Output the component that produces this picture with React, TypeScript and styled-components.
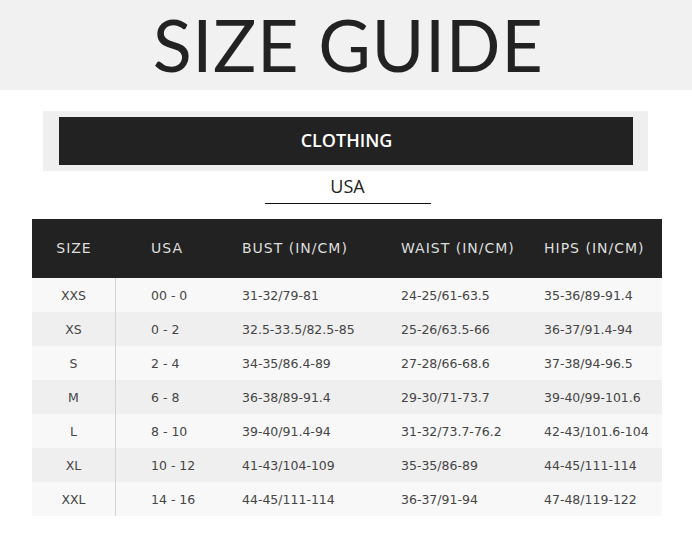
import styled, { createGlobalStyle } from 'styled-components';

const GlobalStyle = createGlobalStyle`
	html, body {
		margin: 0;
		padding: 0;
		background: #ffffff;
	}
	* {
		box-sizing: border-box;
	}
`;

const Page = styled.div`
	width: 692px;
	height: 543px;
	overflow: hidden;
	background: #fff;
`;

const Banner = styled.header`
	height: 90px;
	background: #f1f1f1;
	display: flex;
	justify-content: center;
	align-items: center;
`;

const Title = styled.h1`
	margin: 0;
	font-family: 'Lato', sans-serif;
	font-weight: 400;
	font-size: 72px;
	line-height: 1;
	letter-spacing: 0.6px;
	color: #222;
	padding-bottom: 3px;
	padding-left: 4px;
`;

const TabBox = styled.div`
	margin: 21px 44px 0 43px;
	height: 60px;
	padding: 6px 15px 6px 16px;
	background: #efefef;
`;

const Tab = styled.div`
	height: 48px;
	background: #222;
	color: #fff;
	display: flex;
	align-items: center;
	justify-content: center;
	font-family: 'Open Sans', sans-serif;
	font-weight: 600;
	font-size: 18px;
	padding-left: 1px;
	padding-bottom: 2px;
`;

const Region = styled.div`
	display: flex;
	justify-content: center;
	padding-left: 3px;
`;

const RegionLabel = styled.div`
	width: 166px;
	height: 33px;
	border-bottom: 1.5px solid #111;
	display: flex;
	align-items: center;
	justify-content: center;
	font-family: 'Open Sans', sans-serif;
	font-size: 18px;
	color: #222;
	padding-bottom: 3px;
`;

const Table = styled.div`
	margin: 15px 30px 0 32px;
	width: 630px;
`;

const cols = '84px 91px 159px 143px 153px';

const HeadRow = styled.div`
	display: grid;
	grid-template-columns: ${cols};
	height: 59px;
	background: #222;
	align-items: center;
`;

const HeadCell = styled.div<{ $center?: boolean }>`
	font-family: 'DejaVu Sans', sans-serif;
	font-size: 14px;
	letter-spacing: 1px;
	white-space: nowrap;
	color: #dedede;
	text-align: ${p => (p.$center ? 'center' : 'left')};
	padding-left: ${p => (p.$center ? '0' : '35px')};
	padding-bottom: 2px;
`;

const Row = styled.div<{ $shade: boolean }>`
	display: grid;
	grid-template-columns: ${cols};
	height: 34px;
	background: ${p => (p.$shade ? '#efefef' : '#f8f8f8')};
`;

const Cell = styled.div<{ $first?: boolean }>`
	display: flex;
	align-items: center;
	white-space: nowrap;
	justify-content: ${p => (p.$first ? 'center' : 'flex-start')};
	padding-left: ${p => (p.$first ? '0' : '35px')};
	border-right: ${p => (p.$first ? '1px solid #d4d4d4' : 'none')};
	font-family: 'DejaVu Sans', sans-serif;
	font-size: 12.5px;
	color: #454545;
`;

const headers = ['SIZE', 'USA', 'BUST (IN/CM)', 'WAIST (IN/CM)', 'HIPS (IN/CM)'];

const rows = [
	['XXS', '00 - 0', '31-32/79-81', '24-25/61-63.5', '35-36/89-91.4'],
	['XS', '0 - 2', '32.5-33.5/82.5-85', '25-26/63.5-66', '36-37/91.4-94'],
	['S', '2 - 4', '34-35/86.4-89', '27-28/66-68.6', '37-38/94-96.5'],
	['M', '6 - 8', '36-38/89-91.4', '29-30/71-73.7', '39-40/99-101.6'],
	['L', '8 - 10', '39-40/91.4-94', '31-32/73.7-76.2', '42-43/101.6-104'],
	['XL', '10 - 12', '41-43/104-109', '35-35/86-89', '44-45/111-114'],
	['XXL', '14 - 16', '44-45/111-114', '36-37/91-94', '47-48/119-122'],
];

function App() {
	return (
		<Page>
			<GlobalStyle />
			<Banner>
				<Title>SIZE GUIDE</Title>
			</Banner>
			<TabBox>
				<Tab>CLOTHING</Tab>
			</TabBox>
			<Region>
				<RegionLabel>USA</RegionLabel>
			</Region>
			<Table>
				<HeadRow>
					{headers.map((h, i) => (
						<HeadCell key={h} $center={i === 0}>
							{h}
						</HeadCell>
					))}
				</HeadRow>
				{rows.map((r, i) => (
					<Row key={r[0]} $shade={i % 2 === 1}>
						{r.map((c, j) => (
							<Cell key={j} $first={j === 0}>
								{c}
							</Cell>
						))}
					</Row>
				))}
			</Table>
		</Page>
	);
}

export default App;
